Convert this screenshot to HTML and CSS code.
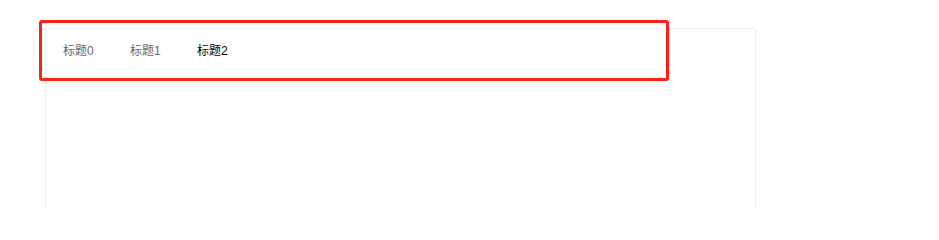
FILE: index.html
```html
<!DOCTYPE html>
<html lang="zh">
<head>
<meta charset="utf-8">
<title>Tabs</title>
<link rel="stylesheet" href="styles.css">
</head>
<body>
<div class="stage">
  <div class="card">
    <div class="tab-bar">
      <div class="tab">标题0</div>
      <div class="tab">标题1</div>
      <div class="tab active">标题2</div>
    </div>
    <div class="card-body"></div>
  </div>
  <div class="highlight"></div>
</div>
</body>
</html>
```

FILE: styles.css
```css
html, body {
  margin: 0;
  padding: 0;
  background: #fff;
}
body {
  font-family: "Liberation Sans", "Noto Sans CJK SC", sans-serif;
  font-size: 12px;
  overflow: hidden;
}
.stage {
  position: relative;
  width: 939px;
  height: 208px;
  padding-top: 28px;
  padding-left: 45px;
  box-sizing: border-box;
  overflow: hidden;
}
.card {
  width: 711px;
  height: 180px;
  border: 1px solid #efefef;
  border-bottom: none;
  box-sizing: border-box;
  background: #fff;
}
.tab-bar {
  display: flex;
  height: 44px;
  align-items: center;
  padding-left: 17px;
}
.tab {
  width: 67px;
  color: #666;
  line-height: 14px;
}
.tab.active {
  color: #000;
}
.highlight {
  position: absolute;
  left: 39px;
  top: 20px;
  width: 630px;
  height: 61px;
  border: 3px solid #fb1f1a;
  border-radius: 3px;
  box-sizing: border-box;
}
```
